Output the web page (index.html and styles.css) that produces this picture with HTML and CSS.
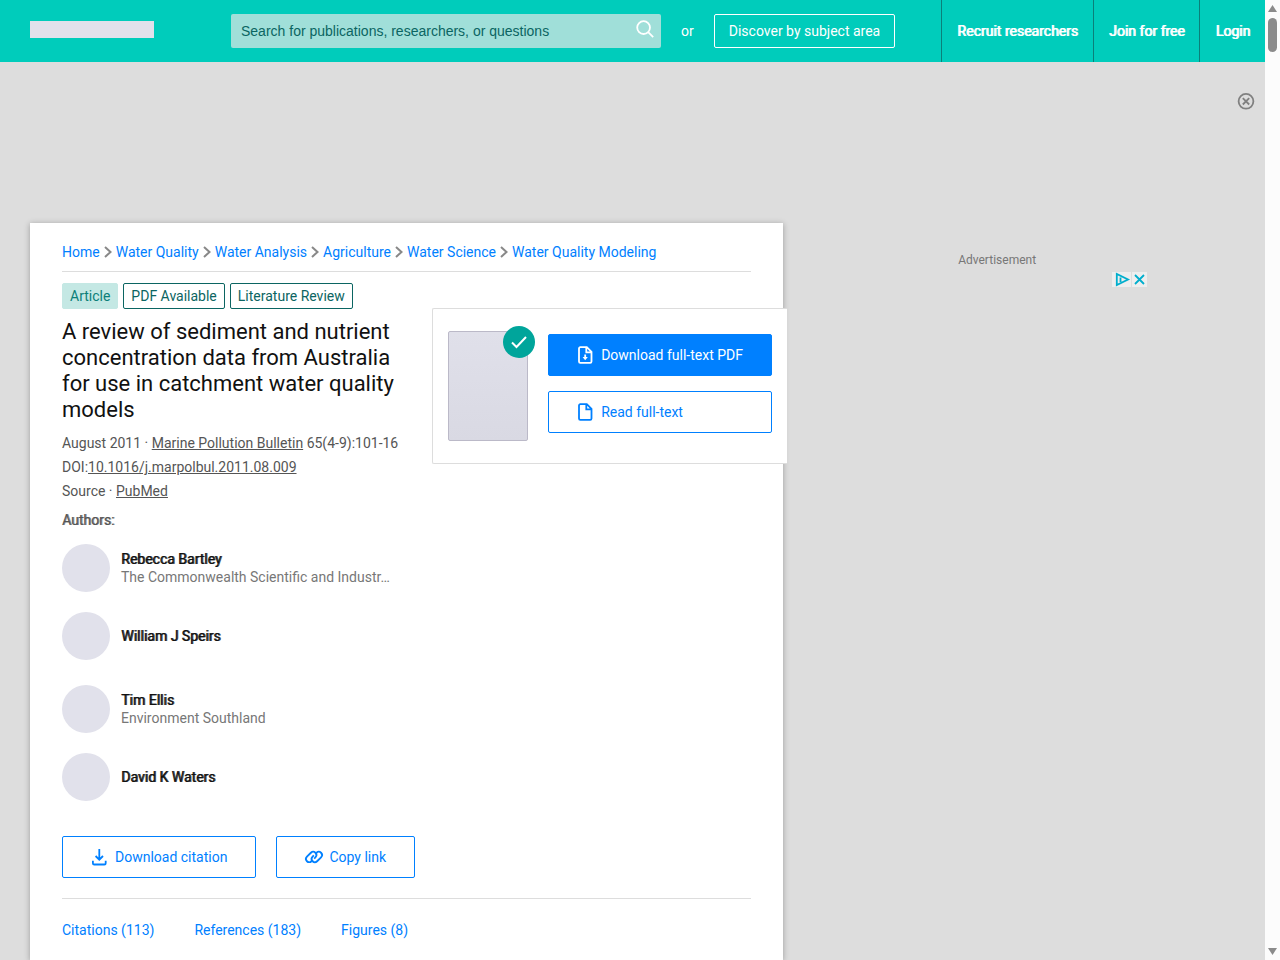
FILE: index.html
```html
<!DOCTYPE html>
<html lang="en">

<head>
    <meta charset="UTF-8" />
    <meta name="viewport" content="width=device-width, initial-scale=1.0" />
    <title>A review of sediment and nutrient concentration data from Australia</title>
    <link rel="stylesheet" href="styles.css">
</head>

<body>
    <div class="page">
        <header class="header">
            <div class="logo"></div>
            <form class="search">
                <input type="text" name="query" aria-label="Search" placeholder="Search for publications, researchers, or questions" />
                <button class="search-btn" aria-label="Submit search">
                    <svg width="18" height="18" viewBox="0 0 18 18"><circle cx="7.6" cy="7.6" r="6.4" /><path d="M12.2 12.2l5 5" /></svg>
                </button>
            </form>
            <span class="or">or</span>
            <a class="discover" href="#">Discover by subject area</a>
            <nav class="nav">
                <a href="#">Recruit researchers</a>
                <a href="#">Join for free</a>
                <a href="#">Login</a>
            </nav>
        </header>

        <div class="banner">
            <button class="close" aria-label="Close">
                <svg width="18" height="18" viewBox="0 0 18 18"><circle cx="9" cy="9.3" r="7.4" /><path d="M5.8 6.1l6.4 6.4M12.2 6.1l-6.4 6.4" /></svg>
            </button>
        </div>

        <div class="content">
            <main class="card">
                <nav class="breadcrumb">
                    <a href="#">Home</a>
                    <svg width="8" height="12" viewBox="0 0 8 12"><path d="M1 1l5.5 5L1 11" /></svg>
                    <a href="#">Water Quality</a>
                    <svg width="8" height="12" viewBox="0 0 8 12"><path d="M1 1l5.5 5L1 11" /></svg>
                    <a href="#">Water Analysis</a>
                    <svg width="8" height="12" viewBox="0 0 8 12"><path d="M1 1l5.5 5L1 11" /></svg>
                    <a href="#">Agriculture</a>
                    <svg width="8" height="12" viewBox="0 0 8 12"><path d="M1 1l5.5 5L1 11" /></svg>
                    <a href="#">Water Science</a>
                    <svg width="8" height="12" viewBox="0 0 8 12"><path d="M1 1l5.5 5L1 11" /></svg>
                    <a href="#">Water Quality Modeling</a>
                </nav>

                <div class="summary">
                    <div class="details">
                        <div class="tags">
                            <span class="tag tag-type">Article</span>
                            <span class="tag">PDF Available</span>
                            <span class="tag">Literature Review</span>
                        </div>
                        <h1>A review of sediment and nutrient concentration data from Australia for use in catchment water quality models</h1>
                        <ul class="meta">
                            <li>August 2011 · <a href="#">Marine Pollution Bulletin</a> 65(4-9):101-16</li>
                            <li>DOI:<a href="#">10.1016/j.marpolbul.2011.08.009</a></li>
                            <li>Source · <a href="#">PubMed</a></li>
                        </ul>
                        <h2>Authors:</h2>
                        <ul class="authors">
                            <li class="author">
                                <div class="avatar"></div>
                                <div class="author-info">
                                    <a href="#">Rebecca Bartley</a>
                                    <p>The Commonwealth Scientific and Industr…</p>
                                </div>
                            </li>
                            <li class="author">
                                <div class="avatar"></div>
                                <div class="author-info"><a href="#">William J Speirs</a></div>
                            </li>
                            <li class="author">
                                <div class="avatar"></div>
                                <div class="author-info">
                                    <a href="#">Tim Ellis</a>
                                    <p>Environment Southland</p>
                                </div>
                            </li>
                            <li class="author">
                                <div class="avatar"></div>
                                <div class="author-info"><a href="#">David K Waters</a></div>
                            </li>
                        </ul>
                    </div>

                    <div class="fulltext">
                        <div class="cover">
                            <svg class="check" width="32" height="32" viewBox="0 0 32 32"><circle cx="16" cy="16" r="16" /><path d="M9 16.5l4.5 4.5L23 11" /></svg>
                        </div>
                        <div class="fulltext-btns">
                            <button class="btn btn-primary">
                                <svg width="16" height="18" viewBox="0 0 16 18"><path d="M3.3 1.2h6.5l4.7 4.6v9.7a1.3 1.3 0 0 1-1.3 1.3H3.3A1.3 1.3 0 0 1 2 15.5v-13a1.3 1.3 0 0 1 1.3-1.3zM9.3 1.5v4.8h5M8.2 8.6v4" /><path class="solid" d="M5.6 11h5.2l-2.6 3.2z" /></svg>
                                Download full-text PDF
                            </button>
                            <button class="btn">
                                <svg width="16" height="18" viewBox="0 0 16 18"><path d="M3.3 1.2h6.5l4.7 4.6v9.7a1.3 1.3 0 0 1-1.3 1.3H3.3A1.3 1.3 0 0 1 2 15.5v-13a1.3 1.3 0 0 1 1.3-1.3zM9.3 1.5v4.8h5" /></svg>
                                Read full-text
                            </button>
                        </div>
                    </div>
                </div>

                <div class="actions">
                    <button class="btn">
                        <svg width="16" height="18" viewBox="0 0 16 18"><path d="M8.3 1v10.5M4.6 8l3.7 3.7L12 8M1.9 12.8v2.4a1.3 1.3 0 0 0 1.3 1.3h10.2a1.3 1.3 0 0 0 1.3-1.3v-2.4" /></svg>
                        Download citation
                    </button>
                    <button class="btn">
                        <svg width="16" height="18" viewBox="0 0 16 18"><path transform="rotate(-45 9 9)" d="M5 10.2h-.8a3.2 3.2 0 0 1 0-6.4h5.6a3.2 3.2 0 0 1 0 6.4H8M13 7.8h.8a3.2 3.2 0 0 1 0 6.4H8.2a3.2 3.2 0 0 1 0-6.4H10" /></svg>
                        Copy link
                    </button>
                </div>

                <nav class="tabs">
                    <a href="#">Citations (113)</a>
                    <a href="#">References (183)</a>
                    <a href="#">Figures (8)</a>
                </nav>
            </main>

            <aside class="ad">
                <p>Advertisement</p>
                <div class="ad-icons">
                    <svg width="19" height="15" viewBox="0 0 19 15"><path d="M4.8 2v11L16 7.5zM8.5 5.5v4.5" /></svg>
                    <svg width="15" height="15" viewBox="0 0 15 15"><path d="M3 3l9 9M12 3l-9 9" /></svg>
                </div>
            </aside>
        </div>
    </div>

    <div class="scrollbar">
        <svg width="9" height="7" viewBox="0 0 9 7"><path d="M4.5 0L9 7H0z" /></svg>
        <div class="thumb"></div>
        <svg class="down" width="9" height="7" viewBox="0 0 9 7"><path d="M0 0h9L4.5 7z" /></svg>
    </div>
</body>

</html>
```

FILE: styles.css
```css
* {
margin: 0;
padding: 0;
box-sizing: border-box;
}

body {
display: flex;
height: 100vh;
overflow: hidden;
background: #ddd;
font: 14px/20px Roboto, "Liberation Sans", sans-serif;
color: #555;
}

a {
text-decoration: none;
color: #0080ff;
}

ul {
list-style: none;
}

svg {
display: block;
flex: none;
overflow: visible;
fill: none;
stroke: currentColor;
stroke-width: 1.8;
}

button {
font: inherit;
cursor: pointer;
}

.page {
display: flex;
flex-direction: column;
flex: 1;
min-width: 0;
}

/* header */
.header {
display: flex;
align-items: center;
height: 62px;
flex: none;
padding-left: 30px;
background: #00ccbb;
color: #fff;
}

.logo {
width: 124px;
height: 17px;
margin-bottom: 3px;
background: #e1e1eb;
}

.search {
display: flex;
width: 430px;
height: 34px;
margin-left: 77px;
background: #a0dfd9;
border-radius: 2px;
}

.search input {
flex: 1;
border: 0;
outline: none;
padding-left: 10px;
background: none;
font: 14px "Liberation Sans", Arial, sans-serif;
}

.search input::placeholder {
color: #0b6562;
}

.search-btn {
padding: 0 7px 4px;
border: 0;
background: none;
color: #fff;
}

.or {
margin: 0 20px;
}

.discover {
height: 34px;
padding: 0 14px;
line-height: 32px;
border: 1px solid #fff;
border-radius: 2px;
color: #fff;
}

.nav {
display: flex;
height: 100%;
margin-left: auto;
}

.nav a {
padding: 0 15px;
line-height: 62px;
border-left: 1px solid #0b7f79;
color: #fff;
text-shadow: 1px 0 0 #fff;
}

.banner {
display: flex;
justify-content: flex-end;
align-items: flex-start;
height: 161px;
flex: none;
padding: 30px 10px;
}

.close {
border: 0;
background: none;
color: #808080;
}

/* publication card */
.content {
display: flex;
align-items: stretch;
flex: 1;
padding: 0 30px;
}

.card {
width: 62.5%;
padding: 19px 32px;
background: #fff;
box-shadow: 0 1px 6px rgba(0, 0, 0, .3);
}

.breadcrumb {
display: flex;
align-items: center;
gap: 4px;
padding-bottom: 9px;
border-bottom: 1px solid #ddd;
}

.breadcrumb svg {
color: #888;
stroke-width: 2;
}

.summary {
display: flex;
align-items: flex-start;
justify-content: space-between;
margin-top: 11px;
}

.details {
width: 50%;
}

.tags {
display: flex;
gap: 5px;
}

.tag {
padding: 0 7px;
line-height: 24px;
border: 1px solid #0b6562;
border-radius: 2px;
color: #0b6562;
white-space: nowrap;
}

.tag-type {
background: #c4e8e4;
border-color: #c4e8e4;
color: #0b7f79;
}

h1 {
margin-top: 10px;
font-size: 22px;
font-weight: 400;
line-height: 26px;
color: #111;
}

.meta {
margin-top: 8px;
line-height: 24px;
}

.meta a {
color: #555;
text-decoration: underline;
}

h2 {
margin: 7px 0 14px;
font-size: 14px;
font-weight: 400;
line-height: 20px;
text-shadow: 1px 0 0 #888;
}

.author {
display: flex;
align-items: center;
gap: 11px;
margin-bottom: 20px;
line-height: 18px;
}

.author:nth-child(even) {
margin-bottom: 25px;
}

.avatar {
width: 48px;
height: 48px;
flex: none;
border-radius: 50%;
background: #e1e1eb;
}

.author-info a {
color: #111;
text-shadow: 1px 0 0 #444;
}

.author-info p {
color: #777;
}

/* full-text box sticks out of the card on the right */
.fulltext {
display: flex;
gap: 20px;
width: 355px;
margin: 25px -36px 0 0;
padding: 22px 15px;
background: #fff;
border: 1px solid #ddd;
border-right: 0;
border-radius: 2px 0 0 2px;
}

.cover {
position: relative;
width: 80px;
height: 110px;
flex: none;
border: 1px solid #bbb9c8;
border-radius: 2px;
background: linear-gradient(#e0e0ea, #d9d9e3);
}

.check {
position: absolute;
top: -6px;
right: -8px;
fill: #00a59b;
stroke: none;
}

.check path {
fill: none;
stroke: #fff;
stroke-width: 2;
}

.fulltext-btns {
display: flex;
flex-direction: column;
flex: 1;
gap: 15px;
padding-top: 3px;
}

.btn {
display: flex;
align-items: center;
gap: 8px;
height: 42px;
padding: 0 28px;
border: 1px solid #0080ff;
border-radius: 2px;
background: #fff;
color: #0080ff;
white-space: nowrap;
}

.btn-primary {
background: #0080ff;
color: #fff;
}

.solid {
fill: currentColor;
stroke: none;
}

.actions {
display: flex;
gap: 20px;
margin-top: 10px;
padding-bottom: 20px;
border-bottom: 1px solid #ddd;
}

.tabs {
display: flex;
gap: 40px;
margin-top: 21px;
}

/* ad column */
.ad {
width: 300px;
margin-left: 64px;
padding-top: 27px;
text-align: center;
font-size: 12px;
color: #777;
}

.ad-icons {
display: flex;
justify-content: flex-end;
gap: 1px;
margin-top: 2px;
color: #00aecd;
}

.ad-icons svg {
background: #eee;
}

/* scrollbar */
.scrollbar {
display: flex;
flex-direction: column;
align-items: center;
width: 15px;
padding: 5px 0;
background: #fcfcfc;
}

.scrollbar svg {
fill: #8b8b8b;
stroke: none;
}

.thumb {
width: 9px;
height: 34px;
margin-top: 6px;
border-radius: 5px;
background: #8b8b8b;
}

.down {
margin-top: auto;
}
```
